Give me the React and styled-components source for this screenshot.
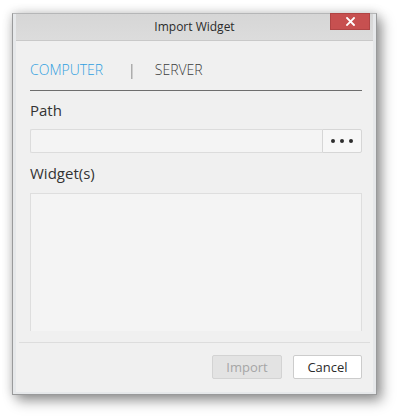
import React from 'react';
import styled, { createGlobalStyle } from 'styled-components';

const GlobalStyle = createGlobalStyle`
  html, body {
    margin: 0;
    padding: 0;
    background: #ffffff;
  }
  body {
    font-family: "Open Sans", "Noto Sans", "Liberation Sans", sans-serif;
    width: 398px;
    height: 416px;
    overflow: hidden;
  }
`;

const Window = styled.div`
  display: flex;
  flex-direction: column;
  box-sizing: border-box;
  margin: 13px 0 0 12px;
  width: 365px;
  height: 382px;
  background: #e6e8ea;
  border: 1px solid rgba(90, 90, 90, 0.55);
  border-top-color: rgba(150, 150, 150, 0.6);
  padding: 0 3px 2px 3px;
  box-shadow: 5px 6px 12px rgba(0, 0, 0, 0.38), 0 0 10px rgba(0, 0, 0, 0.18);
`;

const TitleBar = styled.div`
  display: grid;
  grid-template-columns: 1fr auto 1fr;
  align-items: start;
  height: 26px;
  background: linear-gradient(#d6d6d6, #dcdcdc);
  border-bottom: 1px solid #c9c9c9;
`;

const Title = styled.div`
  grid-column: 2;
  font-size: 12px;
  line-height: 24px;
  color: #2b2b2b;
  padding-top: 1px;
`;

const CloseButton = styled.div`
  grid-column: 3;
  justify-self: end;
  display: flex;
  align-items: center;
  justify-content: center;
  width: 40px;
  height: 17px;
  margin: -1px 3px 0 0;
  background: #c75050;
  border: 1px solid #b04444;
  box-sizing: border-box;
`;

const Content = styled.div`
  flex: 1;
  display: flex;
  flex-direction: column;
  background: #f0f0f0;
  padding: 0 11px 0 14px;
`;

const Tabs = styled.div`
  display: flex;
  align-items: center;
  margin-top: 19px;
  padding-bottom: 10px;
  border-bottom: 1px solid #6e6e6e;
`;

const Tab = styled.span`
  font-size: 14px;
  font-weight: 300;
  line-height: 20px;
  color: ${(p) => (p.active ? '#2f9fe0' : '#3c3c3c')};
`;

const TabDivider = styled.span`
  display: inline-block;
  font-size: 14px;
  line-height: 20px;
  color: #8c8c8c;
  margin: 0 19px 0 25px;
  will-change: transform;
`;

const Label = styled.div`
  font-size: 15px;
  line-height: 20px;
  color: #333333;
  margin-top: ${(p) => p.top}px;
`;

const PathRow = styled.div`
  display: flex;
  margin-top: ${(p) => p.top}px;
  height: 24px;
`;

const PathInput = styled.div`
  flex: 1;
  background: #f4f4f4;
  border: 1px solid #dcdcdc;
  border-right: none;
  border-radius: 2px 0 0 2px;
`;

const BrowseButton = styled.div`
  display: flex;
  align-items: center;
  justify-content: center;
  width: 40px;
  box-sizing: border-box;
  background: #f7f7f7;
  border: 1px solid #d6d6d6;
  border-radius: 0 2px 2px 0;
`;

const WidgetList = styled.div`
  margin-top: 10px;
  height: 138px;
  background: #f4f4f4;
  border: 1px solid #dedede;
  border-bottom: none;
  box-sizing: border-box;
`;

const Footer = styled.div`
  display: flex;
  justify-content: flex-end;
  gap: 11px;
  margin: 11px -8px 0 -11px;
  padding: 12px 8px 0 0;
  border-top: 1px solid #dddddd;
`;

const Button = styled.div`
  display: flex;
  align-items: center;
  justify-content: center;
  box-sizing: border-box;
  width: ${(p) => p.w}px;
  height: 24px;
  font-size: 13px;
  border-radius: 2px;
  background: ${(p) => (p.disabled ? '#e3e3e3' : '#ffffff')};
  border: 1px solid ${(p) => (p.disabled ? '#d3d3d3' : '#cccccc')};
  color: ${(p) => (p.disabled ? '#a6a6a6' : '#2b2b2b')};
`;

const CloseIcon = () => (
  <svg width="9" height="9" viewBox="0 0 9 9">
    <path d="M1 1 L8 8 M8 1 L1 8" stroke="#ffffff" strokeWidth="1.8" strokeLinecap="square" />
  </svg>
);

const DotsIcon = () => (
  <svg width="24" height="6" viewBox="0 0 24 6">
    <circle cx="3" cy="3" r="2" fill="#2e2e2e" />
    <circle cx="12" cy="3" r="2" fill="#2e2e2e" />
    <circle cx="21" cy="3" r="2" fill="#2e2e2e" />
  </svg>
);

export default function App() {
  return (
    <>
      <GlobalStyle />
      <Window>
        <TitleBar>
          <Title>Import Widget</Title>
          <CloseButton>
            <CloseIcon />
          </CloseButton>
        </TitleBar>
        <Content>
          <Tabs>
            <Tab active>COMPUTER</Tab>
            <TabDivider>|</TabDivider>
            <Tab>SERVER</Tab>
          </Tabs>
          <Label top={9}>Path</Label>
          <PathRow top={9}>
            <PathInput />
            <BrowseButton>
              <DotsIcon />
            </BrowseButton>
          </PathRow>
          <Label top={10}>Widget(s)</Label>
          <WidgetList />
          <Footer>
            <Button w={70} disabled>Import</Button>
            <Button w={69}>Cancel</Button>
          </Footer>
        </Content>
      </Window>
    </>
  );
}
